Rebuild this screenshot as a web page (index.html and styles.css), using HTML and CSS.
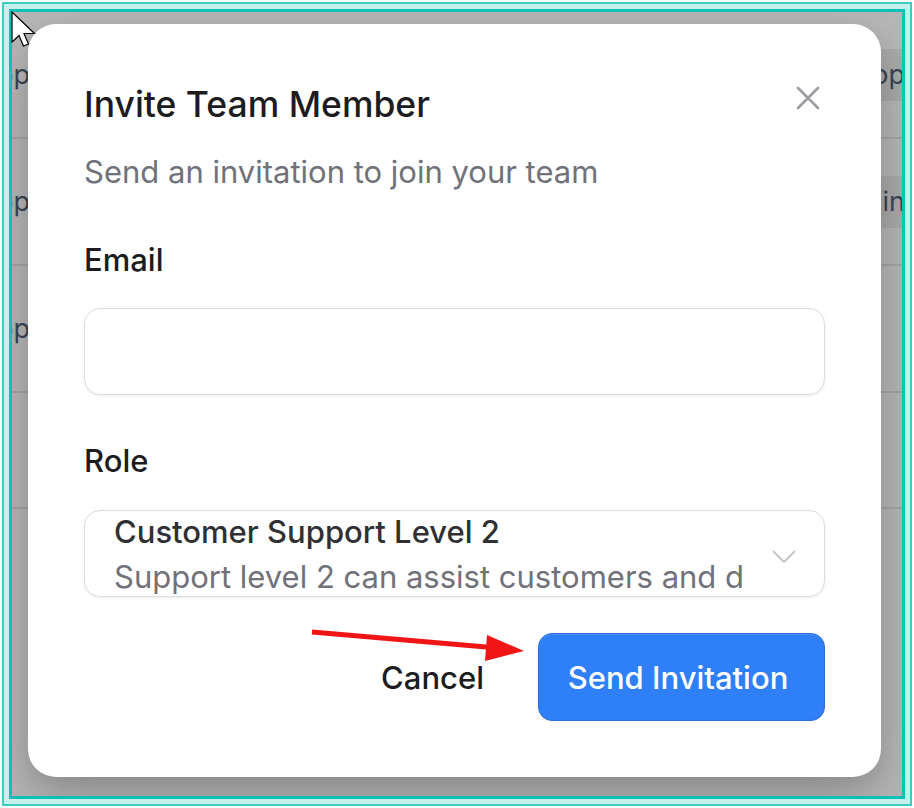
FILE: index.html
```html
<!DOCTYPE html>
<html lang="en">
<head>
<meta charset="utf-8">
<title>Invite Team Member</title>
<link rel="stylesheet" href="styles.css">
</head>
<body>
<div class="frame-outer">
  <div class="frame-inner">
    <div class="table">
      <div class="row"><span class="cell-name">App</span><span class="badge">Shop</span></div>
      <div class="row"><span class="cell-name">App</span><span class="badge">Admin</span></div>
      <div class="row"><span class="cell-name">App</span></div>
      <div class="row row-last"></div>
    </div>

    <div class="modal" role="dialog" aria-labelledby="invite-title">
      <button class="close" aria-label="Close">
        <svg viewBox="0 0 24 24" width="24" height="24"><path d="M2 2 L22 22 M22 2 L2 22" fill="none" stroke="currentColor" stroke-width="2.6" stroke-linecap="round"/></svg>
      </button>
      <h2 class="modal-title" id="invite-title">Invite Team Member</h2>
      <p class="modal-sub">Send an invitation to join your team</p>

      <div class="label label-email">Email</div>
      <div class="input"></div>

      <div class="label label-role">Role</div>
      <div class="select">
        <div class="select-text">
          <div class="select-main">Customer Support Level 2</div>
          <div class="select-desc">Support level 2 can assist customers and d</div>
        </div>
        <svg class="chevron" viewBox="0 0 24 14" width="24" height="14"><path d="M1.5 1.5 L12 12 L22.5 1.5" fill="none" stroke="currentColor" stroke-width="2" stroke-linecap="round" stroke-linejoin="round"/></svg>
      </div>

      <div class="actions">
        <button class="btn-cancel">Cancel</button>
        <button class="btn-primary">Send Invitation</button>
      </div>
    </div>
  </div>
</div>

<svg class="cursor" viewBox="0 0 26 38" width="26" height="38">
  <path d="M1 1 L1 31 L8 24.5 L12.5 35 L17.5 33 L13 22.5 L23.5 22.5 Z" fill="#fff" stroke="#000" stroke-width="1.2" stroke-linejoin="miter"/>
</svg>

<svg class="annot" viewBox="0 0 914 808" width="914" height="808">
  <line x1="312" y1="632" x2="492" y2="647.5" stroke="#f21515" stroke-width="5" stroke-linecap="butt"/>
  <polygon points="487,635 524,651 485,661" fill="#f21515"/>
</svg>
</body>
</html>
```

FILE: styles.css
```css
* { box-sizing: border-box; }

html, body {
  margin: 0;
  padding: 0;
  background: #ffffff;
  font-family: Inter, "Noto Sans", "Liberation Sans", sans-serif;
}

.frame-outer {
  margin: 2px;
  border: 2px solid #3fcac3;
  background: #c6efec;
  padding: 5px;
}

.frame-inner {
  position: relative;
  height: 790px;
  border: 3px solid #12bfb6;
  background: #b7b7b7;
  overflow: hidden;
}

/* dimmed table behind the dialog */
.table {
  margin-left: -40px;
  margin-right: -15px;
}

.row {
  display: flex;
  align-items: center;
  justify-content: space-between;
  height: 127px;
  border-bottom: 2px solid #a5a5a5;
  font-size: 27px;
  color: #3e4553;
}

.row-last {
  height: 116px;
}

.cell-name {
  width: 58px;
  text-align: right;
  white-space: nowrap;
}

.badge {
  display: flex;
  align-items: center;
  height: 52px;
  padding: 0 12px 0 16px;
  background: #aaaaaa;
  border-radius: 6px 0 0 6px;
}

/* dialog */
.modal {
  position: absolute;
  left: 16px;
  top: 12px;
  width: 853px;
  height: 753px;
  background: #ffffff;
  border-radius: 28px;
  padding: 59px 56px 56px;
  box-shadow: 0 24px 60px rgba(0, 0, 0, 0.2), 0 8px 20px rgba(0, 0, 0, 0.08);
}

.close {
  position: absolute;
  right: 61px;
  top: 62px;
  width: 24px;
  height: 24px;
  padding: 0;
  border: 0;
  background: none;
  color: #9a9ba3;
}

.close svg {
  display: block;
}

.modal-title {
  margin: 0;
  font-size: 35.5px;
  line-height: 44px;
  font-weight: 500;
  color: #1c1c20;
}

.modal-sub {
  margin: 25px 0 0;
  font-size: 31px;
  line-height: 40px;
  color: #71717a;
}

.label {
  font-size: 31px;
  line-height: 40px;
  font-weight: 500;
  color: #1c1c20;
}

.label-email {
  margin-top: 48px;
}

.label-role {
  margin-top: 46px;
}

.input {
  margin-top: 28px;
  height: 87px;
  border: 1.5px solid #dcdce0;
  border-radius: 16px;
  box-shadow: 0 1px 3px rgba(0, 0, 0, 0.08);
}

.select {
  margin-top: 29px;
  height: 87px;
  display: flex;
  align-items: center;
  gap: 28px;
  padding: 0 28px 0 29px;
  border: 1.5px solid #dcdce0;
  border-radius: 16px;
  box-shadow: 0 1px 3px rgba(0, 0, 0, 0.08);
  overflow: hidden;
}

.select-text {
  flex: 1;
  overflow: hidden;
  white-space: nowrap;
  font-size: 31px;
  line-height: 45px;
}

.select-main {
  font-weight: 500;
  color: #303034;
}

.select-desc {
  color: #71717a;
}

.chevron {
  flex: none;
  color: #c8c8cd;
  margin-top: 6px;
}

.actions {
  margin-top: 36px;
  display: flex;
  justify-content: flex-end;
  align-items: center;
  gap: 27px;
}

.btn-cancel {
  padding: 0 27px;
  height: 88px;
  border: 0;
  background: none;
  font-family: inherit;
  font-size: 31px;
  font-weight: 500;
  color: #1c1c20;
}

.btn-primary {
  width: 287px;
  height: 88px;
  padding: 0 7px 0 0;
  border: 1px solid #2a6fdc;
  border-radius: 14px;
  background: #2f7ff8;
  color: #ffffff;
  font-family: inherit;
  font-size: 31px;
  font-weight: 500;
  box-shadow: inset 0 1px 0 rgba(255, 255, 255, 0.15);
}

/* overlays: mouse cursor and annotation arrow */
.cursor {
  position: absolute;
  left: 11px;
  top: 11px;
}

.annot {
  position: absolute;
  left: 0;
  top: 0;
  pointer-events: none;
}
```
